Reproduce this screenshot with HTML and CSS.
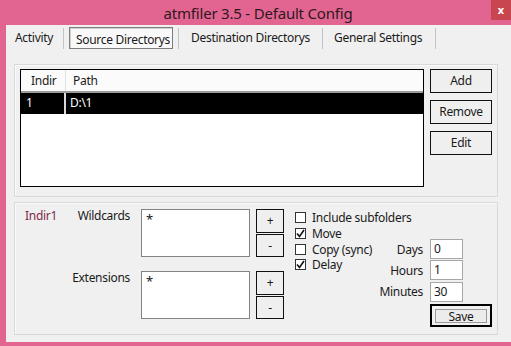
FILE: index.html
```html
<!DOCTYPE html>
<html>
<head>
<meta charset="utf-8">
<title>atmfiler 3.5 - Default Config</title>
<link rel="stylesheet" href="styles.css">
</head>
<body>
<div class="window">
  <div class="titlebar">
    <span class="title">atmfiler 3.5 - Default Config</span>
    <div class="close">x</div>
  </div>
  <div class="frame">
    <div class="tabs">
      <div class="tab t1">Activity</div>
      <div class="tab t2"><div class="seltab">Source Directorys</div></div>
      <div class="tab t3">Destination Directorys</div>
      <div class="tab t4">General Settings</div>
    </div>

    <div class="group g1">
      <div class="list">
        <div class="lrow lhead"><div class="c1">Indir</div><div class="c2">Path</div></div>
        <div class="lrow lsel"><div class="c1">1</div><div class="c2">D:\1</div></div>
      </div>
      <div class="btncol">
        <div class="btn">Add</div>
        <div class="btn">Remove</div>
        <div class="btn">Edit</div>
      </div>
    </div>

    <div class="group g2">
      <div class="fields">
        <div class="indir">Indir1</div>
        <div class="flabel">Wildcards</div>
        <div class="tarea">*</div>
        <div class="pm"><div class="sbtn">+</div><div class="sbtn">-</div></div>

        <div class="indir"></div>
        <div class="flabel">Extensions</div>
        <div class="tarea">*</div>
        <div class="pm"><div class="sbtn">+</div><div class="sbtn">-</div></div>
      </div>

      <div class="checks">
        <div class="chk"><span class="box"></span>Include subfolders</div>
        <div class="chk"><span class="box"><svg width="9" height="9" viewBox="0 0 9 9"><polyline points="1,4.5 3.5,7.5 8,1" fill="none" stroke="#111" stroke-width="1.6"/></svg></span>Move</div>
        <div class="chk"><span class="box"></span>Copy (sync)</div>
        <div class="chk"><span class="box"><svg width="9" height="9" viewBox="0 0 9 9"><polyline points="1,4.5 3.5,7.5 8,1" fill="none" stroke="#111" stroke-width="1.6"/></svg></span>Delay</div>
      </div>

      <div class="timecol">
        <span class="tlabel">Days</span><span class="tinput">0</span>
        <span class="tlabel">Hours</span><span class="tinput">1</span>
        <span class="tlabel">Minutes</span><span class="tinput">30</span>
        <div class="save"><span class="saveinner">Save</span></div>
      </div>
    </div>
  </div>
</div>
</body>
</html>
```

FILE: styles.css
```css
* { box-sizing: border-box; }

body {
  margin: 0;
  width: 511px;
  height: 346px;
  overflow: hidden;
  font-family: "Noto Sans", "Open Sans", sans-serif;
  font-size: 12px;
  letter-spacing: -0.3px;
  color: #1a1a1a;
  background: #e26591;
}

.window {
  width: 511px;
  height: 346px;
  display: flex;
  flex-direction: column;
  background: #e26591;
}

.titlebar {
  height: 25px;
  position: relative;
  display: flex;
  justify-content: center;
  align-items: center;
  padding-left: 5px;
  padding-top: 1px;
}

.title {
  font-size: 15px;
  letter-spacing: -0.2px;
  color: #2e1820;
}

.close {
  position: absolute;
  right: 0;
  top: 0;
  width: 20px;
  height: 20px;
  background: #c8464f;
  color: #fff;
  font-weight: bold;
  font-size: 11px;
  letter-spacing: 0;
  display: flex;
  align-items: center;
  justify-content: center;
  padding-bottom: 2px;
}

.frame {
  flex: 1;
  margin-left: 6px;
  margin-bottom: 4px;
  background: #f0f0f0;
  display: flex;
  flex-direction: column;
}

/* tabs */
.tabs {
  height: 25px;
  padding-top: 3px;
  display: flex;
}

.tab {
  height: 21px;
  border-right: 1px solid #c4c4c4;
  line-height: 20px;
  white-space: nowrap;
}

.t1 { width: 58px; padding-left: 9px; }
.t2 { width: 115px; padding-left: 5px; }
.t3 { width: 144px; padding-left: 12px; }
.t4 { width: 113px; padding-left: 11px; }

.seltab {
  width: 104px;
  height: 22px;
  margin-top: -1px;
  border: 1px solid #7d7d7d;
  box-shadow: inset 1px 1px 0 #cfcfcf;
  background: #f9f9f9;
  padding-left: 6px;
  line-height: 21px;
  padding-top: 1px;
}

/* groups */
.group {
  margin-left: 8px;
  width: 484px;
  height: 133px;
  border: 1px solid #d9d9d9;
  box-shadow: inset 1px 1px 0 #fafafa;
  display: flex;
}

.g1 {
  margin-top: 14px;
  padding: 4px 0 0 5px;
}

.g2 {
  margin-top: 5px;
  padding: 6px 0 0 10px;
}

/* list */
.list {
  width: 404px;
  height: 118px;
  border: 1px solid #000;
  background: #fff;
}

.lrow {
  display: flex;
}

.lhead {
  height: 23px;
  line-height: 22px;
  background: #fbfbfb;
  border-bottom: 2px solid #9b9b9b;
}

.lhead .c1 {
  width: 45px;
  padding-left: 10px;
  border-right: 1px solid #e2e2e2;
}

.lhead .c2 { padding-left: 7px; }

.lsel {
  height: 21px;
  line-height: 20px;
  background: #000;
  color: #fff;
}

.lsel .c1 {
  width: 45px;
  padding-left: 5px;
  border-right: 2px solid #d8d8d8;
}

.lsel .c2 { padding-left: 4px; }

/* buttons */
.btncol {
  margin-left: 6px;
  display: flex;
  flex-direction: column;
  gap: 7px;
}

.btn {
  width: 62px;
  height: 24px;
  border: 1px solid #111;
  background: #efefef;
  text-align: center;
  line-height: 22px;
}

/* lower group */
.fields {
  flex: none;
  width: 259px;
  display: grid;
  grid-template-columns: 45px 71px 109px 34px;
  row-gap: 14px;
  grid-auto-rows: 48px;
}

.indir {
  color: #7e2a4c;
  line-height: 14px;
}

.flabel {
  text-align: right;
  line-height: 14px;
  padding-right: 11px;
}

.tarea {
  width: 109px;
  height: 48px;
  border: 1px solid #838383;
  background: #fff;
  padding: 2px 0 0 4px;
  line-height: 14px;
  font-size: 13px;
}

.pm {
  margin-left: 6px;
  width: 28px;
  display: flex;
  flex-direction: column;
  gap: 1px;
}

.sbtn {
  width: 28px;
  height: 24px;
  border: 1px solid #111;
  background: #efefef;
  text-align: center;
  line-height: 21px;
  font-size: 12px;
}

.checks {
  flex: 1;
  min-width: 0;
  margin-left: 11px;
  padding-top: 1px;
  display: flex;
  flex-direction: column;
}

.chk {
  height: 15.7px;
  line-height: 15px;
  display: flex;
  align-items: center;
  white-space: nowrap;
}

.box {
  flex: none;
  width: 11px;
  height: 11px;
  border: 1px solid #333;
  background: #fff;
  margin-right: 6px;
  display: flex;
  align-items: center;
  justify-content: center;
}

.timecol {
  flex: none;
  margin-right: 5px;
  padding-top: 30px;
  display: grid;
  grid-template-columns: auto 62px;
  grid-auto-rows: min-content;
  column-gap: 7px;
  row-gap: 1.3px;
  align-items: center;
  align-content: start;
}

.tlabel {
  justify-self: end;
}

.tinput {
  width: 33px;
  height: 20px;
  border: 1px solid #a6a6a6;
  background: #fff;
  padding-left: 3px;
  line-height: 17px;
}

.save {
  grid-column: 2;
  margin-top: 1px;
  width: 62px;
  height: 23px;
  border: 2px solid #000;
  background: #f0f0f0;
  padding: 3px 3px 2px 3px;
  display: flex;
}

.saveinner {
  flex: 1;
  border: 1px solid #9a9a9a;
  background: #ececec;
  text-align: center;
  line-height: 13px;
}
```
